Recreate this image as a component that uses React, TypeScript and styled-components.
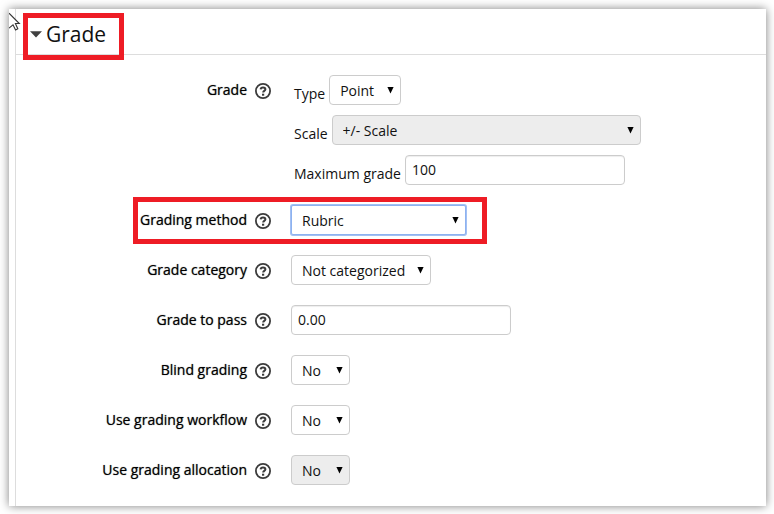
import React, { useId } from "react";
import styled, { createGlobalStyle } from "styled-components";

const GlobalStyle = createGlobalStyle`
  * { box-sizing: border-box; }
  body {
    margin: 0;
    background: #fff;
    color: #111;
    font: 14px/20px "Open Sans", "Noto Sans", sans-serif;
  }
`;

const Card = styled.main`
  position: relative;
  margin: 9px 8px 8px 9px;
  padding-left: 6px;
  background: #fff;
  box-shadow: 0 0 9px rgba(0, 0, 0, 0.5);
`;

const Panel = styled.form`
  border-left: 1px solid #ddd;
  padding-bottom: 21px;
`;

const Header = styled.header`
  position: relative;
  height: 46px;
  padding: 10px 0 0 14px;
  border-bottom: 1px solid #ddd;
`;

const Title = styled.h1`
  margin: 0;
  font-size: 21px;
  line-height: 30px;
  font-weight: 400;
`;

const Toggle = styled.button`
  display: flex;
  align-items: center;
  gap: 4px;
  padding: 0;
  border: 0;
  background: none;
  color: inherit;
  font: inherit;
`;

const HeaderHighlight = styled.span`
  position: absolute;
  top: 4px;
  left: 7px;
  width: 101px;
  height: 47px;
  border: 5px solid #ee1c25;
  pointer-events: none;
`;

const RowHighlight = styled.span`
  position: absolute;
  top: -8px;
  left: 117px;
  width: 354px;
  height: 47px;
  border: 5px solid #ee1c25;
  pointer-events: none;
`;

const Pointer = styled.svg`
  position: absolute;
  top: 3px;
  left: 0;
  width: 12px;
  height: 20px;
`;

const Fields = styled.div`
  display: grid;
  gap: 20px;
  padding-top: 20px;
`;

const Row = styled.div`
  position: relative;
  display: grid;
  grid-template-columns: 255px 1fr;
  column-gap: 20px;
  align-items: start;
`;

const LabelCell = styled.div`
  display: flex;
  justify-content: flex-end;
  align-items: center;
  gap: 8px;
  height: 30px;
`;

const Label = styled.label`
  color: #000;
  text-shadow: 0 0 1px rgba(0, 0, 0, 0.6);
`;

const HelpButton = styled.button`
  display: block;
  width: 16px;
  height: 16px;
  margin-top: 2px;
  padding: 0;
  border: 0;
  background: none;
`;

const Group = styled.div`
  display: grid;
  gap: 10px;
  padding-left: 3px;
`;

const SubRow = styled.div`
  display: flex;
  gap: 4px;
`;

const SubLabel = styled.label`
  padding-top: 9px;
  line-height: 20px;
`;

const SelectWrap = styled.span<{ $width: number }>`
  position: relative;
  display: block;
  width: ${(p) => p.$width}px;
  height: 30px;
`;

const SelectBox = styled.select<{ $active?: boolean }>`
  appearance: none;
  display: block;
  width: 100%;
  height: 30px;
  margin: 0;
  padding: 1px 20px 0 10px;
  border: 1px solid ${(p) => (p.$active ? "#8db2f0" : "#ccc")};
  border-radius: ${(p) => (p.$active ? 2 : 4)}px;
  box-shadow: ${(p) => (p.$active ? "0 0 0 1px #a3c0f3" : "none")};
  background: #fff;
  color: #111;
  font: inherit;
  opacity: 1;
  outline: none;
  &:disabled { background: #ededed; }
`;

const Arrow = styled.svg`
  position: absolute;
  top: 11px;
  right: 7px;
  width: 7px;
  height: 8px;
  pointer-events: none;
`;

const TextBox = styled.input`
  display: block;
  width: 220px;
  height: 30px;
  margin: 0;
  padding: 0 6px 1px;
  border: 1px solid #ccc;
  border-radius: 4px;
  box-shadow: inset 0 1px 1px rgba(0, 0, 0, 0.07);
  background: #fff;
  color: #111;
  font: inherit;
  outline: none;
`;

function Help({ topic }: { topic: string }) {
  return (
    <HelpButton type="button" aria-label={`Help with ${topic}`}>
      <svg viewBox="0 0 16 16" width="16" height="16" fill="none" stroke="#3b3b3b">
        <circle cx="8" cy="8" r="7.1" strokeWidth="1.8" />
        <path d="M5.6 6.4C5.7 5 6.7 4.4 8 4.4s2.4.7 2.4 1.9c0 1.6-2.2 1.5-2.2 3.1" strokeWidth="2" />
        <path d="M7 11.7h2.2" strokeWidth="2" />
      </svg>
    </HelpButton>
  );
}

type SelectProps = { id: string; value: string; width: number; disabled?: boolean; active?: boolean };

function Select({ id, value, width, disabled, active }: SelectProps) {
  return (
    <SelectWrap $width={width}>
      <SelectBox id={id} defaultValue={value} disabled={disabled} $active={active}>
        <option>{value}</option>
      </SelectBox>
      <Arrow viewBox="0 0 7 8" aria-hidden="true">
        <path d="M0.4 1h6.2L3.5 7.4z" fill="#000" />
      </Arrow>
    </SelectWrap>
  );
}

type FieldProps = {
  label: string;
  value: string;
  width?: number;
  text?: boolean;
  disabled?: boolean;
  highlighted?: boolean;
};

function Field({ label, value, width = 59, text, disabled, highlighted }: FieldProps) {
  const id = useId();
  return (
    <Row>
      <LabelCell>
        <Label htmlFor={id}>{label}</Label>
        <Help topic={label} />
      </LabelCell>
      {text ? (
        <TextBox id={id} defaultValue={value} />
      ) : (
        <Select id={id} value={value} width={width} disabled={disabled} active={highlighted} />
      )}
      {highlighted && <RowHighlight />}
    </Row>
  );
}

export default function App() {
  return (
    <>
      <GlobalStyle />
      <Card>
        <Panel>
          <Header>
            <Title>
              <Toggle type="button" aria-expanded="true">
                <svg width="12" height="7" viewBox="0 0 12 7" aria-hidden="true">
                  <path d="M0 0.3h12L6 6.5z" fill="#404040" />
                </svg>
                Grade
              </Toggle>
            </Title>
            <HeaderHighlight />
          </Header>
          <Fields>
            <Row role="group" aria-labelledby="grade-label">
              <LabelCell>
                <Label as="span" id="grade-label">Grade</Label>
                <Help topic="Grade" />
              </LabelCell>
              <Group>
                <SubRow>
                  <SubLabel htmlFor="type">Type</SubLabel>
                  <Select id="type" value="Point" width={72} />
                </SubRow>
                <SubRow>
                  <SubLabel htmlFor="scale">Scale</SubLabel>
                  <Select id="scale" value="+/- Scale" width={309} disabled />
                </SubRow>
                <SubRow>
                  <SubLabel htmlFor="maximum">Maximum grade</SubLabel>
                  <TextBox id="maximum" defaultValue="100" />
                </SubRow>
              </Group>
            </Row>
            <Field label="Grading method" value="Rubric" width={175} highlighted />
            <Field label="Grade category" value="Not categorized" width={140} />
            <Field label="Grade to pass" value="0.00" text />
            <Field label="Blind grading" value="No" />
            <Field label="Use grading workflow" value="No" />
            <Field label="Use grading allocation" value="No" disabled />
          </Fields>
        </Panel>
        <Pointer viewBox="0 0 12 20" aria-hidden="true">
          <path
            d="M0 1.2L10.3 11.5H6.4L8.8 16.8L6.6 18L4 12.8L0 16.2"
            fill="#fff"
            stroke="#333"
            strokeWidth="1.1"
          />
        </Pointer>
      </Card>
    </>
  );
}
